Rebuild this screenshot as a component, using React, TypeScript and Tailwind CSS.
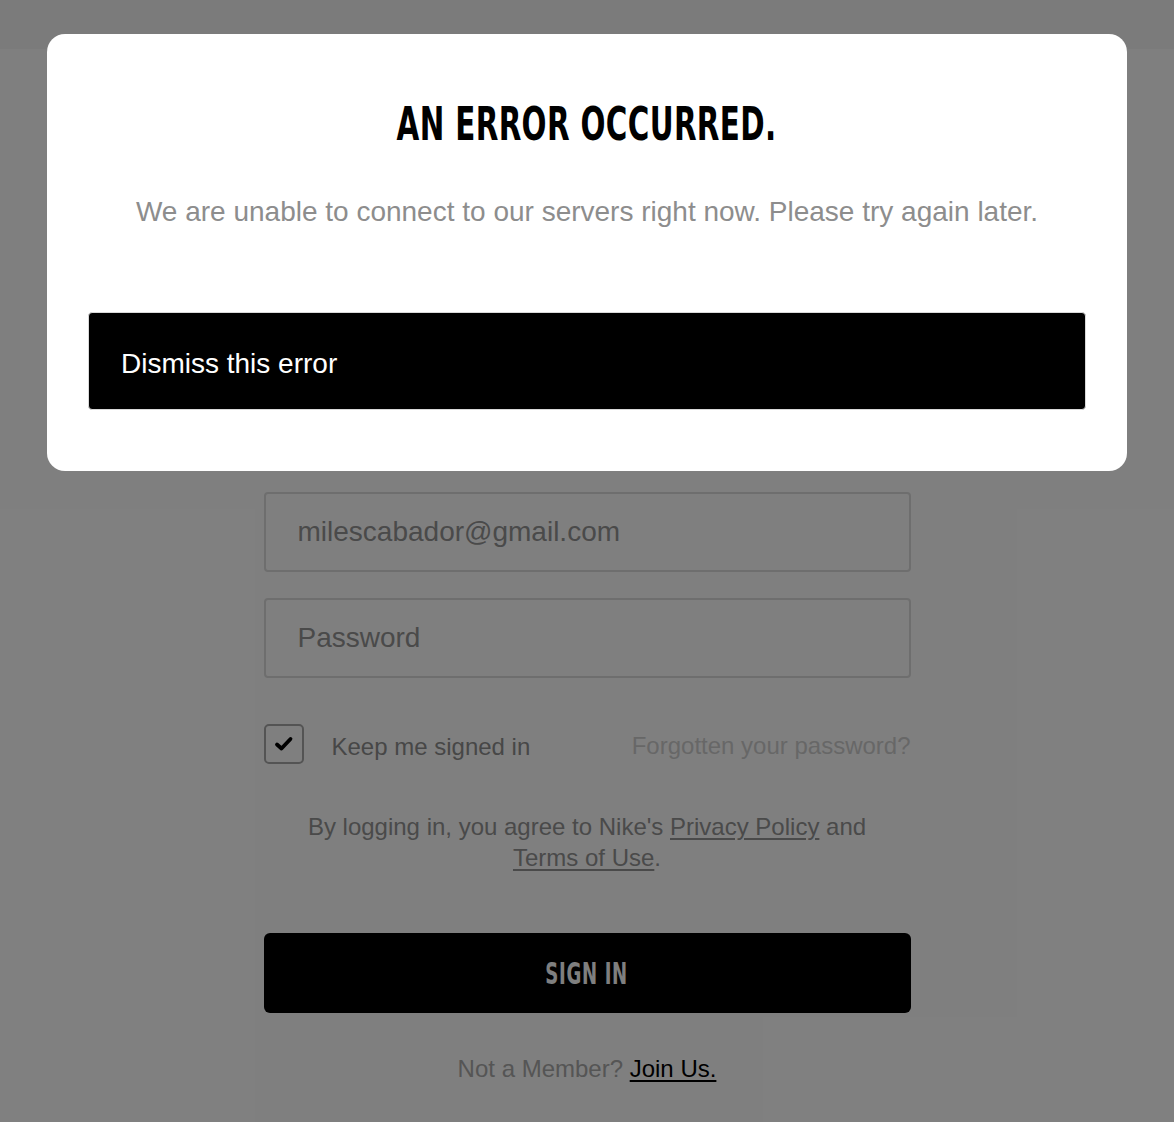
import React from "react";

const sans = { fontFamily: '"Liberation Sans", Arial, sans-serif' };
const cond = { fontFamily: '"DejaVu Sans Condensed", "Liberation Sans Narrow", sans-serif' };

export default function App() {
  return (
    <div className="relative w-[1174px] h-[1122px] overflow-hidden bg-white" style={sans}>
      {/* underlying page */}
      <div className="h-[49px] bg-[#f6f6f6]" />
      <div className="flex flex-col items-center pt-[443px]">
        <div className="w-[647px] flex flex-col">
          <div className="h-[80px] border-2 border-[#dcdcdc] rounded-[4px] flex items-center pl-[32px] text-[28px] text-[#949494]">
            milescabador@gmail.com
          </div>
          <div className="mt-[26px] h-[80px] border-2 border-[#dcdcdc] rounded-[4px] flex items-center pl-[32px] text-[28px] text-[#949494]">
            Password
          </div>
          <div className="mt-[46px] flex items-center h-[40px]">
            <div className="w-[40px] h-[40px] border-2 border-[#a8a8a8] rounded-[5px] flex items-center justify-center">
              <svg width="20" height="16" viewBox="0 0 20 16">
                <path d="M3 8.5 L7.5 12.5 L16.5 3" fill="none" stroke="#000" strokeWidth="3.8" strokeLinecap="round" strokeLinejoin="round" />
              </svg>
            </div>
            <span className="ml-[28px] mt-[6px] text-[24px] text-[#8f8f8f]">Keep me signed in</span>
            <span className="ml-auto mt-[4px] text-[24px] text-[#cfcfcf]">Forgotten your password?</span>
          </div>
          <p className="mt-[47px] text-center text-[24px] leading-[31px] text-[#949494]">
            By logging in, you agree to Nike's <span className="underline underline-offset-[3px]">Privacy Policy</span> and
            <br />
            <span className="underline underline-offset-[3px]">Terms of Use</span>.
          </p>
          <div className="mt-[60px] h-[80px] bg-black rounded-[6px] flex items-center justify-center">
            <span className="inline-block scale-x-[0.67] text-white text-[30px] font-bold tracking-[1px]" style={cond}>
              SIGN IN
            </span>
          </div>
          <p className="mt-[38px] text-center text-[24px] text-[#aaaaaa]">
            Not a Member? <span className="text-black underline underline-offset-[3px]">Join Us.</span>
          </p>
        </div>
      </div>

      {/* overlay */}
      <div className="absolute inset-0 bg-black/50" />

      {/* modal */}
      <div className="absolute left-[47px] top-[34px] w-[1080px] h-[437px] bg-white rounded-[18px] flex flex-col items-center">
        <h1
          className="mt-[67px] inline-block scale-x-[0.71] text-black text-[46px] font-bold leading-none tracking-[0.5px]"
          style={cond}
        >
          AN ERROR OCCURRED.
        </h1>
        <p className="mt-[44px] text-[28px] leading-[42px] text-[#8d8d8d]">
          We are unable to connect to our servers right now. Please try again later.
        </p>
        <button className="mt-[79px] w-[998px] h-[98px] bg-black border border-[#d9d9d9] rounded-[4px] flex items-center pl-[32px] pt-[6px] text-white text-[28px]">
          Dismiss this error
        </button>
      </div>
    </div>
  );
}
